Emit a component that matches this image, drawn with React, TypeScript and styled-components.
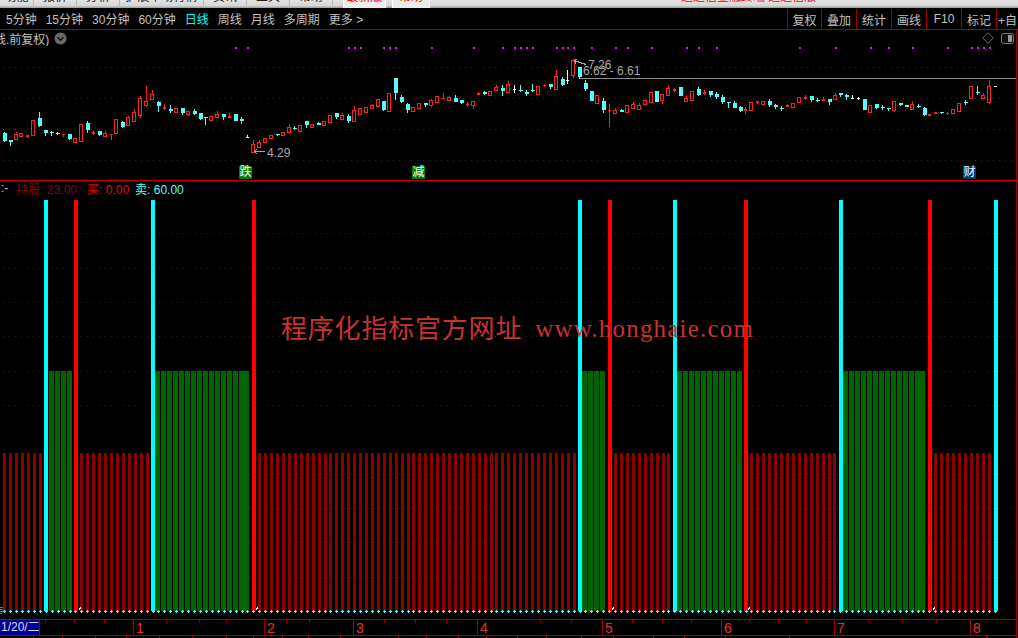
import React from 'react';
import styled, {createGlobalStyle} from 'styled-components';

type Kind = 'h' | 'f' | 'c' | 'w';
type Candle = [number, number, number, number, number, Kind];

// numbers read off the 3x crops: [x, bodyTop, bodyBottom, wickTop, wickBottom, kind]
const segmentA: Candle[] = [
  [13, 190, 214, 186, 216, 'c'], [31, 210, 216, 210, 228, 'c'], [49, 192, 206, 186, 208, 'h'],
  [65, 190, 197, 190, 197, 'h'], [82, 195, 200, 195, 203, 'f'], [100, 150, 194, 150, 194, 'h'],
  [118, 144, 168, 126, 172, 'c'], [136, 180, 190, 180, 198, 'c'], [153, 187, 189, 183, 198, 'c'],
  [172, 188, 191, 185, 195, 'c'], [189, 193, 196, 193, 200, 'f'], [208, 192, 206, 192, 210, 'c'],
  [226, 205, 215, 205, 215, 'h'], [244, 162, 212, 162, 212, 'h'], [262, 159, 180, 153, 188, 'c'],
  [280, 185, 191, 182, 194, 'f'], [298, 183, 194, 183, 198, 'c'], [316, 189, 197, 184, 197, 'h'],
  [334, 193, 195, 193, 209, 'f'], [350, 148, 188, 148, 188, 'h'], [367, 156, 170, 153, 174, 'c'],
  [385, 141, 165, 138, 168, 'h'], [403, 126, 152, 118, 154, 'h'], [421, 84, 136, 78, 143, 'h'],
  [439, 94, 106, 48, 112, 'h'], [457, 72, 86, 60, 90, 'h'], [475, 96, 108, 92, 126, 'c'],
  [493, 110, 116, 102, 120, 'f'], [511, 118, 122, 105, 130, 'c'], [529, 115, 125, 115, 130, 'h'],
  [547, 114, 130, 114, 135, 'c'], [565, 124, 131, 124, 137, 'h'], [583, 124, 131, 118, 135, 'c'],
  [601, 130, 146, 130, 151, 'c'], [616, 141, 143, 141, 165, 'c'], [634, 139, 149, 139, 152, 'h'],
  [652, 132, 140, 124, 140, 'h'], [670, 133, 142, 133, 150, 'c'], [688, 138, 144, 130, 144, 'f'],
  [706, 132, 152, 132, 152, 'c'], [724, 148, 152, 142, 162, 'c'], [742, 201, 203, 196, 203, 'w'],
  [760, 222, 245, 210, 248, 'h'], [778, 216, 230, 210, 232, 'h'], [796, 205, 215, 205, 218, 'h'],
  [814, 196, 203, 196, 203, 'h'], [832, 192, 194, 192, 198, 'c'], [850, 187, 194, 187, 194, 'h'],
  [868, 172, 185, 162, 188, 'h'], [883, 174, 178, 168, 179, 'c'], [901, 166, 182, 166, 182, 'h'],
  [919, 154, 166, 154, 174, 'c'], [937, 163, 170, 163, 170, 'h'], [955, 160, 164, 156, 164, 'c'],
  [973, 154, 166, 154, 166, 'h'], [991, 136, 155, 136, 155, 'h'], [1009, 130, 142, 130, 147, 'c'],
];

const segmentB: Candle[] = [
  [7, 195, 207, 189, 208, 'h'], [25, 198, 213, 192, 218, 'c'], [43, 180, 212, 168, 212, 'h'],
  [61, 175, 191, 175, 191, 'h'], [79, 172, 185, 172, 185, 'h'], [97, 165, 173, 161, 175, 'h'],
  [115, 147, 167, 147, 167, 'h'], [130, 153, 180, 153, 183, 'c'], [148, 130, 182, 130, 182, 'h'],
  [166, 84, 129, 84, 150, 'c'], [184, 142, 156, 135, 160, 'c'], [202, 162, 180, 158, 188, 'c'],
  [220, 172, 182, 172, 182, 'h'], [238, 160, 174, 160, 178, 'h'], [256, 160, 165, 160, 170, 'c'],
  [274, 150, 164, 146, 170, 'h'], [292, 139, 155, 139, 160, 'h'], [310, 144, 146, 130, 146, 'f'],
  [328, 142, 151, 138, 153, 'h'], [346, 144, 155, 135, 155, 'c'], [364, 151, 158, 151, 162, 'c'],
  [382, 162, 166, 157, 171, 'f'], [400, 153, 164, 153, 177, 'h'], [415, 130, 136, 126, 136, 'f'],
  [433, 126, 131, 123, 134, 'c'], [451, 123, 136, 123, 136, 'h'], [469, 111, 119, 105, 119, 'h'],
  [487, 114, 122, 105, 137, 'c'], [505, 102, 126, 93, 130, 'h'], [523, 117, 119, 105, 129, 'w'],
  [541, 121, 123, 105, 125, 'c'], [559, 125, 131, 120, 137, 'c'], [577, 121, 123, 102, 125, 'c'],
  [595, 108, 131, 108, 131, 'h'], [613, 105, 108, 102, 110, 'f'], [631, 102, 111, 102, 116, 'c'],
  [649, 78, 116, 60, 116, 'h'], [667, 87, 105, 81, 108, 'c'], [682, 89, 91, 60, 102, 'w'],
  [700, 30, 75, 27, 84, 'h'], [718, 50, 81, 50, 87, 'c'], [736, 99, 117, 90, 122, 'c'],
  [754, 123, 152, 123, 152, 'c'], [772, 136, 158, 136, 158, 'h'], [790, 153, 181, 145, 188, 'c'],
  [808, 180, 182, 162, 230, 'f'], [826, 179, 189, 174, 192, 'h'], [844, 180, 185, 177, 185, 'c'],
  [862, 166, 185, 166, 185, 'h'], [880, 162, 173, 157, 177, 'h'], [898, 165, 177, 160, 180, 'h'],
  [916, 150, 163, 150, 163, 'h'], [934, 127, 155, 127, 155, 'h'], [949, 124, 157, 124, 157, 'c'],
  [967, 133, 151, 133, 162, 'h'], [985, 114, 136, 105, 139, 'h'], [1003, 117, 122, 113, 125, 'f'],
];

const segmentC: Candle[] = [
  [1, 112, 138, 112, 138, 'c'], [19, 144, 153, 136, 157, 'h'], [37, 123, 149, 123, 149, 'h'],
  [55, 116, 135, 112, 138, 'c'], [73, 125, 131, 120, 135, 'f'], [91, 124, 134, 124, 141, 'c'],
  [109, 131, 142, 126, 147, 'c'], [127, 141, 156, 136, 161, 'c'], [145, 157, 160, 157, 174, 'c'],
  [163, 158, 174, 153, 174, 'c'], [181, 171, 182, 167, 186, 'c'], [196, 178, 182, 171, 191, 'f'],
  [214, 157, 179, 157, 179, 'h'], [232, 154, 158, 154, 161, 'f'], [250, 154, 161, 154, 161, 'h'],
  [268, 153, 165, 148, 170, 'c'], [286, 166, 172, 162, 177, 'c'], [304, 174, 176, 168, 183, 'c'],
  [322, 165, 170, 162, 170, 'f'], [340, 160, 170, 160, 170, 'h'], [358, 142, 155, 142, 155, 'h'],
  [376, 142, 146, 136, 150, 'f'], [394, 139, 150, 139, 155, 'c'], [412, 150, 152, 145, 156, 'c'],
  [430, 147, 152, 141, 152, 'f'], [448, 148, 156, 148, 164, 'c'], [466, 135, 148, 130, 151, 'h'],
  [481, 130, 136, 130, 142, 'c'], [499, 136, 141, 132, 150, 'c'], [517, 145, 147, 136, 147, 'w'],
  [535, 144, 146, 141, 150, 'w'], [553, 148, 179, 148, 179, 'c'], [571, 166, 185, 166, 185, 'h'],
  [589, 163, 174, 163, 178, 'c'], [607, 171, 175, 166, 180, 'c'], [625, 175, 177, 175, 183, 'c'],
  [643, 154, 179, 154, 185, 'h'], [661, 160, 164, 160, 168, 'c'], [679, 165, 171, 165, 171, 'c'],
  [697, 162, 177, 154, 179, 'h'], [715, 168, 170, 162, 175, 'c'], [733, 174, 195, 170, 198, 'c'],
  [748, 193, 197, 193, 197, 'f'], [766, 186, 191, 186, 191, 'f'], [784, 186, 188, 186, 191, 'c'],
  [802, 188, 190, 186, 194, 'f'], [820, 178, 188, 178, 188, 'h'], [838, 160, 182, 160, 182, 'h'],
  [856, 155, 160, 150, 164, 'c'], [874, 109, 143, 109, 143, 'h'], [892, 127, 129, 109, 135, 'c'],
  [910, 135, 144, 130, 147, 'h'], [928, 108, 156, 90, 162, 'h'], [946, 108, 110, 108, 110, 'w'],
];

const magentaDots = [
  235, 247, 348, 354, 360, 383, 389, 395, 431, 473, 502, 514, 520, 526, 532, 556, 562, 567, 573,
  591, 615, 627, 651, 686, 698, 716, 799, 835, 870, 888, 912, 947, 971, 977, 983, 989,
];

const CYAN_BARS = [44, 151, 578, 673, 839, 994];
const RED_BARS = [74, 252, 608, 744, 928];
const GREEN_SPANS: [number, number][] = [[44, 74], [151, 252], [578, 608], [673, 744], [839, 928]];

const slots = Array.from({length: 168}, (_, i) => Math.round(4.3 + 5.93 * i));
const tallBars = [...CYAN_BARS, ...RED_BARS];

const PRICE_GRID = [67, 98, 129, 160];
const INDICATOR_GRID = [233, 268, 302, 336, 371, 405, 474, 508, 542, 577];

const AXIS_TOP_TICKS = [
  45, 74, 104, 166, 199, 226, 286, 309, 384, 415, 446, 540, 571, 632, 662, 691, 749, 778, 806, 868,
  902, 936,
];
const AXIS_BOTTOM_TICKS = [
  33, 62, 95, 126, 159, 192, 226, 253, 282, 308, 340, 398, 426, 458, 486, 517, 546, 581, 613, 653,
  684, 725, 789, 986,
];
const MONTHS: [string, number][] = [
  ['1', 131], ['2', 89], ['3', 124], ['4', 125], ['5', 119], ['6', 113], ['7', 136], ['8', 46],
];

const COLORS: Record<Kind, string> = {h: '#ff2020', f: '#ff2020', c: '#54fcfc', w: '#ffffff'};

const renderSegment = (rows: Candle[], baseX: number, baseY: number) =>
  rows.map(([x, top, bottom, wickTop, wickBottom, kind]) => {
    const cx = baseX + Math.floor(x / 3);
    const y = (v: number) => baseY + Math.round(v / 3);
    const color = COLORS[kind];
    const bodyHeight = Math.max(y(bottom) - y(top), 1);
    return (
      <g key={`${baseX}-${x}`}>
        <rect x={cx} y={y(wickTop)} width={1} height={y(wickBottom) - y(wickTop)} fill={color} />
        {kind === 'h' ? (
          <rect x={cx - 1.5} y={y(top) + 0.5} width={3} height={bodyHeight} fill="#000" stroke={color} />
        ) : (
          <rect x={cx - 1} y={y(top)} width={kind === 'c' ? 4 : 3} height={bodyHeight} fill={color} />
        )}
      </g>
    );
  });

const GlobalStyle = createGlobalStyle`
  html, body {
    margin: 0;
    background: #000;
    overflow: hidden;
  }
`;

const App = () => (
  <>
    <GlobalStyle />
    <Page>
      <MenuStrip>
        <MenuItem $w={34}>功能</MenuItem>
        <MenuItem $w={43}>报价</MenuItem>
        <MenuItem $w={43}>分析</MenuItem>
        <MenuItem $w={84}>扩展市场行情</MenuItem>
        <MenuItem $w={43}>资讯</MenuItem>
        <MenuItem $w={43}>工具</MenuItem>
        <MenuItem $w={43}>帮助</MenuItem>
        <MenuTab $w={43} $ml={10}>最新版</MenuTab>
        <MenuTab $w={38} $ml={6}>帮助</MenuTab>
        <MenuTitle>通达信金融终端 通达信版</MenuTitle>
      </MenuStrip>

      <Toolbar>
        <Periods>
          <Period>5分钟</Period>
          <Period>15分钟</Period>
          <Period>30分钟</Period>
          <Period>60分钟</Period>
          <Period $active>日线</Period>
          <Period>周线</Period>
          <Period>月线</Period>
          <Period>多周期</Period>
          <Period>更多 &gt;</Period>
        </Periods>
        <Tool $w={34}>复权</Tool>
        <Tool $w={35}>叠加</Tool>
        <Tool $w={35}>统计</Tool>
        <Tool $w={35}>画线</Tool>
        <Tool $w={35}>F10</Tool>
        <Tool $w={35}>标记</Tool>
        <Tool $w={22}>+自</Tool>
      </Toolbar>

      <Charts>
        <PricePane>
          <PriceHeader>
            <PriceTitle>线.前复权)</PriceTitle>
            <svg width="13" height="13" viewBox="0 0 13 13">
              <circle cx="6.5" cy="6.5" r="6" fill="#6a6a6a" />
              <path d="M3.5 5.2 6.5 8.2 9.5 5.2" fill="none" stroke="#111" strokeWidth="1.6" />
            </svg>
            <HeaderIcons>
              <svg width="12" height="12" viewBox="0 0 12 12">
                <path d="M6 .8 11.2 6 6 11.2 .8 6Z" fill="none" stroke="#6e6e6e" />
              </svg>
              <svg width="13" height="11" viewBox="0 0 13 11">
                <rect x=".5" y=".5" width="12" height="10" rx="2" fill="#111" stroke="#777" />
                <rect x="7" y="2" width="4" height="7" fill="#999" />
              </svg>
            </HeaderIcons>
          </PriceHeader>

          <ChartSvg width="1016" height="134" viewBox="0 46 1016 134">
            {PRICE_GRID.map((y) => (
              <line key={y} x1="3" x2="1016" y1={y + 0.5} y2={y + 0.5} stroke="#8c0000" strokeDasharray="1 5" />
            ))}
            {magentaDots.map((x) => (
              <rect key={x} x={x} y="47" width="2" height="2" fill="#ff00ff" />
            ))}
            <rect x="579" y="78" width="437" height="1" fill="#8a8a8a" />
            {renderSegment(segmentA, 0, 70)}
            {renderSegment(segmentB, 340, 50)}
            {renderSegment(segmentC, 680, 50)}
            <path d="M254 151.5H265M254 151.5l3-2M254 151.5l3 2" stroke="#a8a8a8" fill="none" />
            <PriceLabel x="267" y="157">4.29</PriceLabel>
            <path d="M574 60.5 586 64.5M574 60.5l3-1M574 60.5l2 3" stroke="#a8a8a8" fill="none" />
            <PriceLabel x="588" y="69">7.26</PriceLabel>
            <PriceLabel x="583" y="75">6.62 - 6.61</PriceLabel>
          </ChartSvg>

          <Badge $left={239}>跌</Badge>
          <Badge $left={412}>减</Badge>
          <Badge $left={963} $blue>财</Badge>
        </PricePane>

        <IndicatorPane>
          <Legend>
            <LegendItem $color="#c8c8c8" $mr={8}>:-</LegendItem>
            <LegendItem $color="#8f0000" $mr={10}>持股: 23.00</LegendItem>
            <LegendItem $color="#f00000" $mr={6}>买: 0.00</LegendItem>
            <LegendItem $color="#54fcfc">卖: 60.00</LegendItem>
          </Legend>

          <ChartSvg width="1016" height="420" viewBox="0 199 1016 420">
            {INDICATOR_GRID.map((y) => (
              <line key={y} x1="3" x2="1016" y1={y + 0.5} y2={y + 0.5} stroke="#7c0000" strokeDasharray="1 5" />
            ))}
            {slots.map((x) => {
              if (tallBars.some((t) => x >= t - 3 && x <= t + 5)) return null;
              const green = GREEN_SPANS.some(([a, b]) => x > a && x < b);
              return green ? (
                <rect key={x} x={x - 3} y="371" width="5" height="240" fill="#006400" />
              ) : (
                <rect key={x} x={x - 1} y="453" width="3" height="158" fill="#8b0000" />
              );
            })}
            {CYAN_BARS.map((x) => (
              <rect key={x} x={x} y="200" width="4" height="411" fill="#00ffff" />
            ))}
            {RED_BARS.map((x) => (
              <rect key={x} x={x} y="200" width="4" height="411" fill="#ff0000" />
            ))}
            {slots.map((x) => (
              <path key={x} d={`M${x - 1} 611.5h3M${x + 0.5} 610v3`} stroke="#54fcfc" fill="none" />
            ))}
            {[79, 256, 612, 748, 933].map((x) => (
              <path key={x} d={`M${x} 609.5l1-1v-1h1`} stroke="#fff" fill="none" />
            ))}
            <path d="M0 607.5h3M0 609.5h3M0 611.5h3M0 613.5h2" stroke="#777" fill="none" />
          </ChartSvg>

          <Watermark>
            程序化指标官方网址
            <WatermarkUrl>www.honghaie.com</WatermarkUrl>
          </Watermark>
        </IndicatorPane>

        <TimeAxis>
          <DateBox>1/20/二</DateBox>
          <AxisGap />
          {MONTHS.map(([label, width]) => (
            <Month key={label} $w={width}>{label}</Month>
          ))}
          <AxisTicks width="1016" height="4">
            {AXIS_TOP_TICKS.map((x) => (
              <rect key={x} x={x} y="0" width="1" height="3" fill="#a00000" />
            ))}
          </AxisTicks>
        </TimeAxis>
        <BottomTicks width="1016" height="2">
          {AXIS_BOTTOM_TICKS.map((x) => (
            <rect key={x} x={x} y="0" width={x === 986 ? 2 : 1} height="2" fill="#a00000" />
          ))}
        </BottomTicks>
      </Charts>
    </Page>
  </>
);

export default App;

const Page = styled.div`
  width: 1018px;
  height: 638px;
  overflow: hidden;
  background: #000;
  font-family: 'Liberation Sans', 'Noto Sans CJK SC', sans-serif;
  font-size: 12px;
  color: #c0c0c0;
`;

const MenuStrip = styled.div`
  display: flex;
  height: 8px;
  box-sizing: border-box;
  overflow: hidden;
  background: linear-gradient(#e4e4e4, #d6d6d6 70%, #9a9a9a);
`;

const MenuItem = styled.div<{$w: number}>`
  flex: none;
  box-sizing: border-box;
  width: ${(props) => props.$w}px;
  margin-top: -10px;
  height: 18px;
  line-height: 14px;
  text-align: center;
  color: #222;
  white-space: nowrap;
  border-right: 1px solid #b8b8b8;
`;

const MenuTab = styled(MenuItem)<{$ml: number}>`
  margin-left: ${(props) => props.$ml}px;
  color: #f00000;
  background: #ececec;
  border-left: 1px solid #fff;
  border-right: 1px solid #fff;
`;

const MenuTitle = styled.div`
  margin: -10px 0 0 251px;
  line-height: 14px;
  color: #f00000;
  white-space: nowrap;
`;

const Toolbar = styled.div`
  display: flex;
  height: 21px;
  border-bottom: 1px solid #a00000;
  overflow: hidden;
`;

const Periods = styled.div`
  flex: 1;
  display: flex;
  align-items: center;
  gap: 9px;
  padding: 0 0 0 6px;
`;

const Period = styled.span<{$active?: boolean}>`
  color: ${(props) => (props.$active ? '#00ffff' : '#c0c0c0')};
  white-space: nowrap;
`;

const Tool = styled.div<{$w: number}>`
  flex: none;
  box-sizing: border-box;
  width: ${(props) => props.$w}px;
  margin-top: 1px;
  display: flex;
  align-items: center;
  justify-content: center;
  border-left: 1px solid #a00000;
  white-space: nowrap;
`;

const Charts = styled.div`
  width: 1017px;
  height: 609px;
  box-sizing: border-box;
  border-right: 1px solid #a00000;
`;

const PricePane = styled.div`
  position: relative;
  border-bottom: 1px solid #d00000;
`;

const PriceHeader = styled.div`
  display: flex;
  align-items: center;
  gap: 5px;
  height: 16px;
  overflow: hidden;
`;

const PriceTitle = styled.span`
  margin-left: -6px;
  white-space: nowrap;
`;

const HeaderIcons = styled.div`
  margin-left: auto;
  display: flex;
  align-items: center;
  gap: 7px;
  padding-right: 2px;
`;

const ChartSvg = styled.svg`
  display: block;
  shape-rendering: crispEdges;
`;

const PriceLabel = styled.text`
  font-family: 'Liberation Sans', sans-serif;
  font-size: 12px;
  fill: #a8a8a8;
  shape-rendering: auto;
`;

const Badge = styled.div<{$left: number; $blue?: boolean}>`
  position: absolute;
  top: 136px;
  left: ${(props) => props.$left}px;
  width: 13px;
  height: 13px;
  line-height: 13px;
  text-align: center;
  color: #fff;
  background: ${(props) => (props.$blue ? '#003a78' : '#007f00')};
`;

const IndicatorPane = styled.div`
  position: relative;
`;

const Legend = styled.div`
  display: flex;
  align-items: center;
  height: 18px;
  padding: 0 0 4px 1px;
  box-sizing: border-box;
`;

const LegendItem = styled.span<{$color: string; $mr?: number}>`
  margin-right: ${(props) => props.$mr ?? 0}px;
  color: ${(props) => props.$color};
  white-space: pre;
`;

const Watermark = styled.div`
  position: absolute;
  top: 133px;
  left: 281px;
  display: flex;
  align-items: center;
  gap: 13px;
  line-height: 30px;
  white-space: nowrap;
  color: #c93232;
  font-size: 26px;
  letter-spacing: 0.8px;
`;

const WatermarkUrl = styled.span`
  font-family: 'Liberation Serif', serif;
  font-size: 25px;
  letter-spacing: 1.2px;
`;

const TimeAxis = styled.div`
  position: relative;
  display: flex;
  height: 15px;
  border-top: 1px solid #a00000;
  border-bottom: 1px solid #a00000;
`;

const DateBox = styled.div`
  flex: none;
  box-sizing: border-box;
  width: 40px;
  padding-left: 1px;
  line-height: 15px;
  white-space: nowrap;
  overflow: hidden;
  color: #d8d8ff;
  background: #00008c;
  border-right: 1px solid #a00000;
`;

const AxisGap = styled.div`
  flex: none;
  width: 93px;
`;

const Month = styled.div<{$w: number}>`
  flex: none;
  box-sizing: border-box;
  width: ${(props) => props.$w}px;
  padding-left: 2px;
  line-height: 16px;
  font-size: 14px;
  color: #e83232;
  border-left: 1px solid #a00000;
`;

const AxisTicks = styled.svg`
  position: absolute;
  top: 0;
  left: 0;
  pointer-events: none;
`;

const BottomTicks = styled.svg`
  display: block;
`;
